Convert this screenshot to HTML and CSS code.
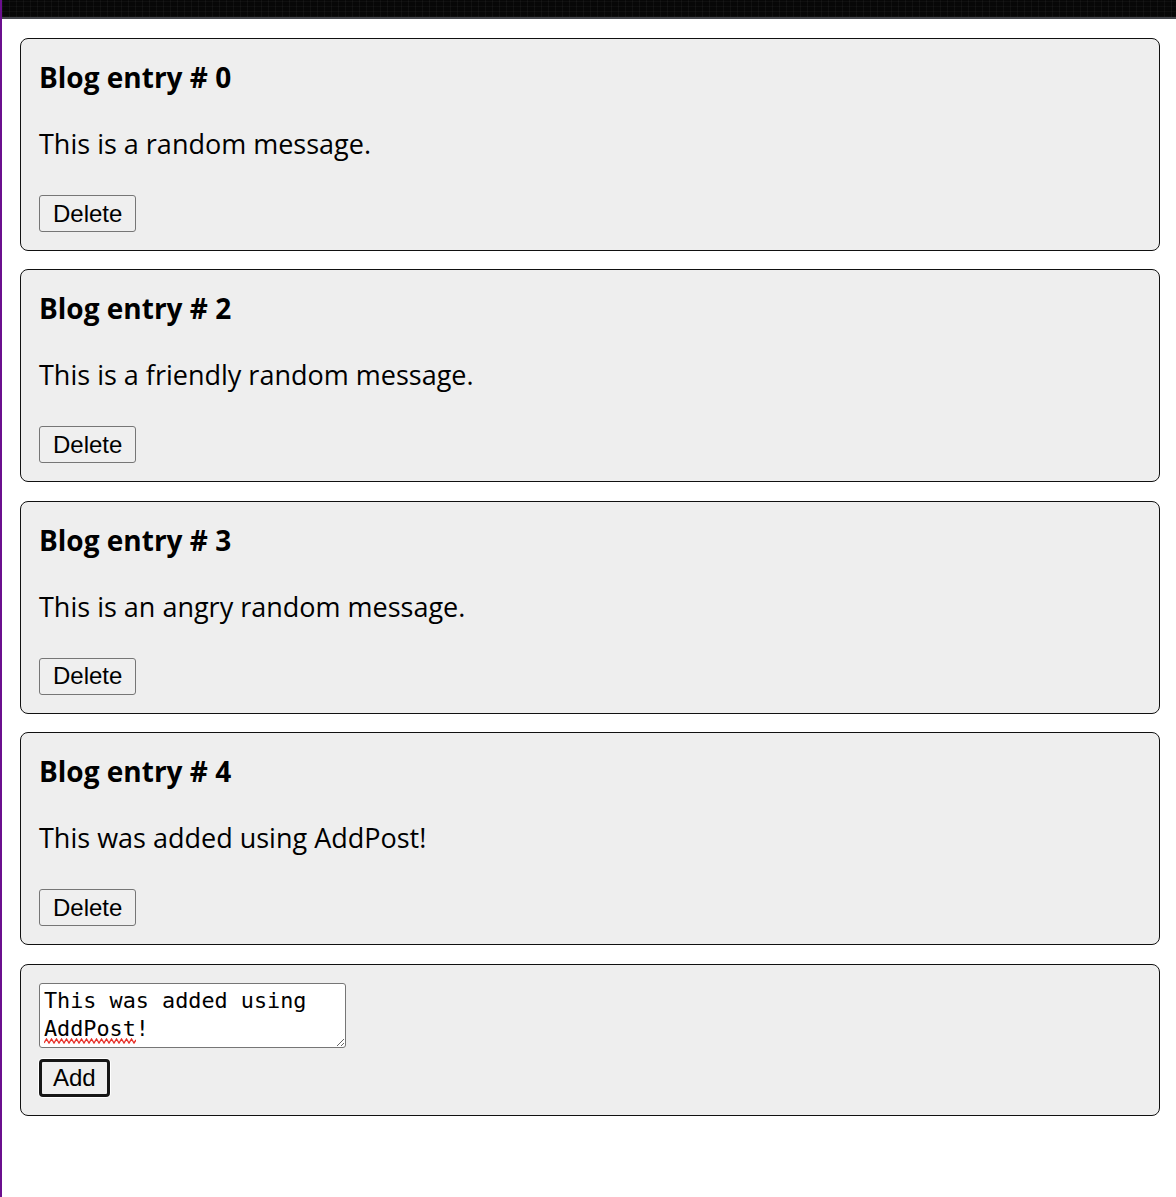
FILE: index.html
```html
<!DOCTYPE html>
<html lang="en">
<head>
<meta charset="utf-8">
<title>Blog</title>
<link rel="stylesheet" href="styles.css">
</head>
<body>
<div class="frame">
  <div class="topbar"></div>
  <main class="posts">
    <article class="card">
      <h3 class="title">Blog entry # 0</h3>
      <p class="message">This is a random message.</p>
      <button class="btn" type="button">Delete</button>
    </article>
    <article class="card">
      <h3 class="title">Blog entry # 2</h3>
      <p class="message">This is a friendly random message.</p>
      <button class="btn" type="button">Delete</button>
    </article>
    <article class="card">
      <h3 class="title">Blog entry # 3</h3>
      <p class="message">This is an angry random message.</p>
      <button class="btn" type="button">Delete</button>
    </article>
    <article class="card">
      <h3 class="title">Blog entry # 4</h3>
      <p class="message">This was added using AddPost!</p>
      <button class="btn" type="button">Delete</button>
    </article>
    <form class="card add-card">
      <div class="field">
        <textarea class="input" spellcheck="false">This was added using AddPost!</textarea>
        <svg class="squiggle" width="92" height="6" viewBox="0 0 92 6" aria-hidden="true"><path d="M0 5 L2.5 1 L5 5 L7.5 1 L10 5 L12.5 1 L15 5 L17.5 1 L20 5 L22.5 1 L25 5 L27.5 1 L30 5 L32.5 1 L35 5 L37.5 1 L40 5 L42.5 1 L45 5 L47.5 1 L50 5 L52.5 1 L55 5 L57.5 1 L60 5 L62.5 1 L65 5 L67.5 1 L70 5 L72.5 1 L75 5 L77.5 1 L80 5 L82.5 1 L85 5 L87.5 1 L90 5 L92 2" fill="none" stroke="#e8342c" stroke-width="1.4"/></svg>
      </div>
      <button class="btn btn-focus" type="button">Add</button>
    </form>
  </main>
</div>
</body>
</html>
```
FILE: styles.css
```css
html, body {
  margin: 0;
  padding: 0;
  background: #ffffff;
}

.frame {
  min-height: 1197px;
  border-left: 2px solid #6b0f8e;
  box-sizing: border-box;
}

.topbar {
  height: 17px;
  border-bottom: 2px solid #45474c;
  background-color: #070707;
  background-image:
    repeating-linear-gradient(90deg, rgba(255,255,255,0.04) 0 1px, transparent 1px 7px),
    repeating-linear-gradient(0deg, rgba(255,255,255,0.03) 0 1px, transparent 1px 5px);
}

.posts {
  padding: 19px 16px 0 18px;
  display: flex;
  flex-direction: column;
  gap: 18.4px;
}

.card {
  margin: 0;
  background: #eeeeee;
  border: 1px solid #111111;
  border-radius: 8px;
  padding: 0 18px 18px;
  display: flex;
  flex-direction: column;
  align-items: flex-start;
}

.title {
  margin: 19px 0 0;
  font-family: "Open Sans", "Noto Sans", sans-serif;
  font-weight: 700;
  font-size: 28px;
  line-height: 38px;
  color: #000;
}

.message {
  margin: 27px 0 0;
  font-family: "Open Sans", "Noto Sans", sans-serif;
  font-size: 27px;
  line-height: 41px;
  color: #000;
}

.btn {
  margin-top: 31px;
  height: 37px;
  padding: 0 13px;
  box-sizing: border-box;
  font-family: "Liberation Sans", Arial, sans-serif;
  font-size: 24px;
  line-height: 1;
  color: #000;
  background: #efefef;
  border: 1px solid #767676;
  border-radius: 3px;
}

.add-card {
  padding-top: 18px;
}

.field {
  position: relative;
}

.input {
  display: block;
  width: 307px;
  height: 65px;
  box-sizing: border-box;
  margin: 0;
  padding: 3px 4px;
  font-family: "DejaVu Sans Mono", "Liberation Mono", monospace;
  font-size: 21.8px;
  line-height: 28px;
  color: #000;
  background: #fff;
  border: 1px solid #767676;
  border-radius: 3px;
}

.squiggle {
  position: absolute;
  left: 5px;
  top: 55px;
}

.btn-focus {
  margin-top: 11px;
  height: 38px;
  border: 3px solid #161616;
  border-radius: 4px;
  padding: 0 11px;
  box-shadow: 0 0 0 1px #ffffff;
}
```
